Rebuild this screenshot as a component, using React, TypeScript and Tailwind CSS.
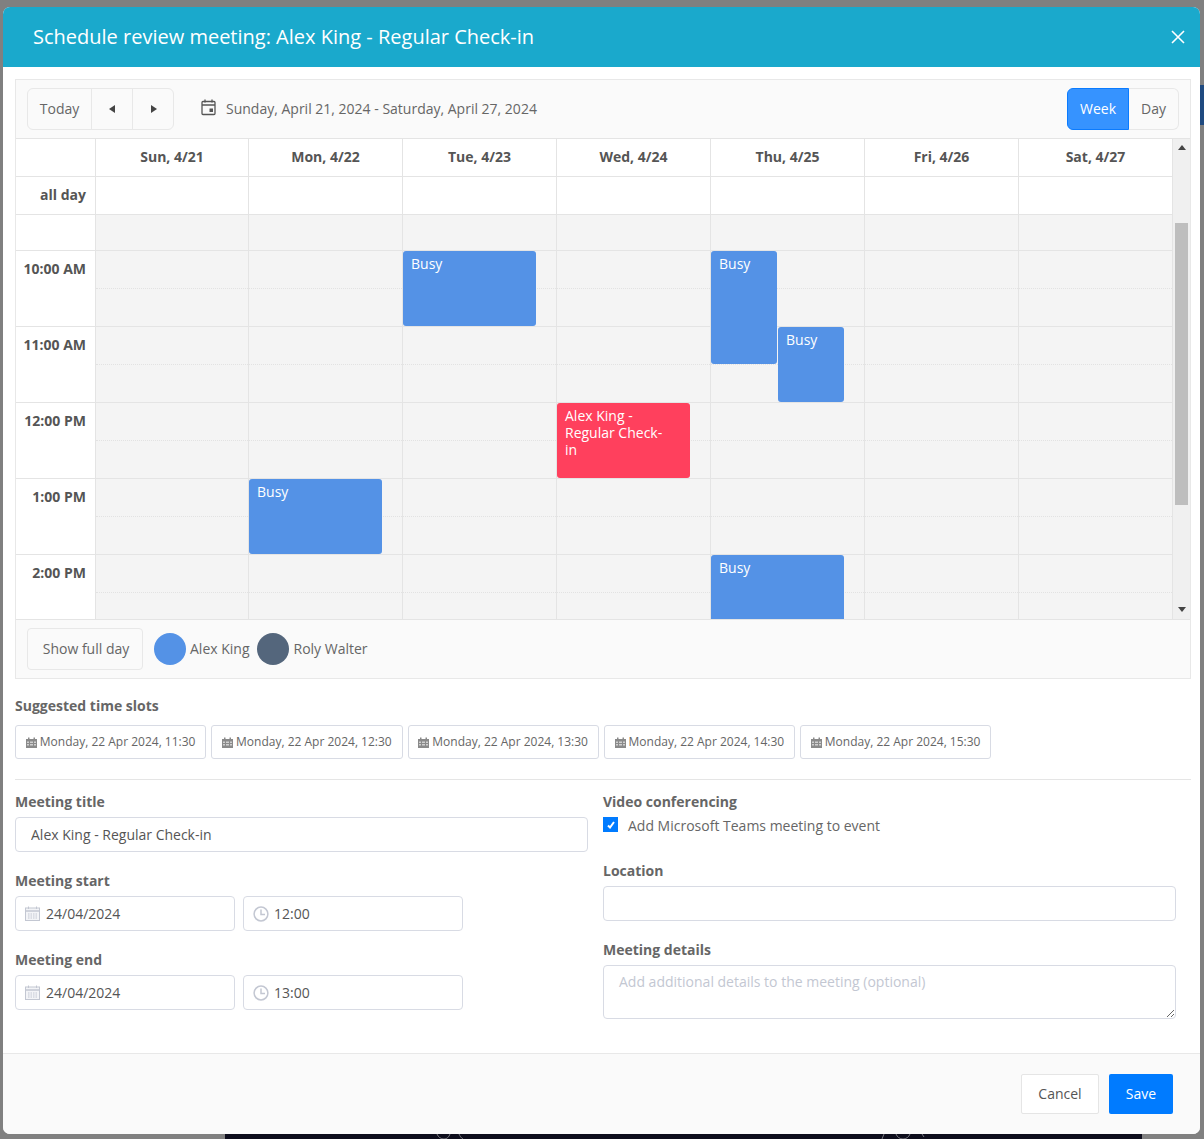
const days = ["Sun, 4/21", "Mon, 4/22", "Tue, 4/23", "Wed, 4/24", "Thu, 4/25", "Fri, 4/26", "Sat, 4/27"];
const times = ["10:00 AM", "11:00 AM", "12:00 PM", "1:00 PM", "2:00 PM"];
const slots = ["11:30", "12:30", "13:30", "14:30", "15:30"];

const CalendarIcon = () => (
  <svg width="15" height="15" viewBox="0 0 15 15" fill="#f3f4f7" stroke="#c3c7d2" strokeWidth="1">
    <rect x="0.5" y="2" width="14" height="12.5" />
    <path d="M0.5 5h14" strokeWidth="1.5" />
    <path d="M3.5 0.5v2.5M11.5 0.5v2.5" />
    <path d="M3 8h9M3 10h9M3 12h9" strokeDasharray="1.5 1" />
  </svg>
);

const ClockIcon = () => (
  <svg width="16" height="16" viewBox="0 0 16 16" fill="none" stroke="#c3c7d2" strokeWidth="1.5">
    <circle cx="8" cy="8" r="6.9" />
    <path d="M8 3.5V8.4h4" />
  </svg>
);

const MiniCalendar = () => (
  <svg width="11" height="11" viewBox="0 0 11 11" className="shrink-0">
    <path d="M0 2h11v9H0z" fill="#8a8a8a" />
    <path d="M2 0.5h1.5V3H2zM7.5 0.5H9V3H7.5z" fill="#8a8a8a" />
    <path d="M1 4.5h2v1.5H1zM4 4.5h3v1.5H4zM8 4.5h2v1.5H8zM1 7h2v1.5H1zM4 7h3v1.5H4zM8 7h2v1.5H8z" fill="#d0d0d0" />
  </svg>
);

const Event = ({ label, className }: { label: string; className: string }) => (
  <div className={`absolute rounded-[3px] pl-2 pr-5 pt-[4px] text-[14px] leading-[17px] text-white ${className}`}>{label}</div>
);

const DateField = ({ date, time }: { date: string; time: string }) => (
  <div className="flex w-[448px] gap-2">
    <div className="relative w-[220px]">
      <span className="absolute left-[10px] top-[10px]"><CalendarIcon /></span>
      <input defaultValue={date} className="h-[35px] w-full rounded-[4px] border border-[#d8dbe4] pl-[30px] text-[14px] text-[#555]" />
    </div>
    <div className="relative w-[220px]">
      <span className="absolute left-[10px] top-[10px]"><ClockIcon /></span>
      <input defaultValue={time} className="h-[35px] w-full rounded-[4px] border border-[#d8dbe4] pl-[30px] text-[14px] text-[#555]" />
    </div>
  </div>
);

const Label = ({ children }: { children: string }) => (
  <div className="mb-1 h-[21px] text-[14px] font-bold leading-[19px] text-[#666]">{children}</div>
);

export default function App() {
  return (
    <div className="relative h-[1139px] w-[1204px] overflow-hidden bg-[#808080] pt-[7px] pl-[3px] font-['Open_Sans',sans-serif]">
      {/* page peeking out under the modal */}
      <div className="absolute bottom-0 left-[225px] h-[5px] w-[917px] bg-[#0d0d1c]">
        <svg className="absolute left-[210px] top-0" width="40" height="5" viewBox="0 0 40 5" fill="none" stroke="#77777f">
          <path d="M2 0c1 3 4 5 7 5s5-2 6-5M24 0c1 2 2 4 4 5" />
        </svg>
        <svg className="absolute left-[655px] top-0" width="50" height="5" viewBox="0 0 50 5" fill="none" stroke="#77777f">
          <path d="M2 5l2-5M16 0c1 3 4 5 7 5s6-2 7-5M42 0l2 3" />
        </svg>
      </div>
      <div className="absolute right-0 top-[85px] h-[40px] w-[4px] bg-[#1f4a80]" />

      <div className="relative flex h-[1127px] w-[1197px] flex-col overflow-hidden rounded-[7px] bg-white">
        {/* Header */}
        <div className="flex h-[60px] shrink-0 items-center justify-between bg-[#1aa9cc] pl-[30px] pr-[15px] text-white">
          <h1 className="text-[20px] leading-none">Schedule review meeting: Alex King - Regular Check-in</h1>
          <svg width="14" height="14" viewBox="0 0 14 14" stroke="white" strokeWidth="1.6">
            <path d="M1 1l12 12M13 1L1 13" />
          </svg>
        </div>

        <div className="flex-1 px-3 pt-3">
          {/* Calendar */}
          <div className="h-[600px] w-[1176px] border border-[#e8e8e8] bg-[#fafafa]">
            <div className="flex h-[59px] items-center justify-between border-b border-[#e4e4e4] px-[11px] text-[14px] text-[#666]">
              <div className="flex items-center">
                <div className="flex h-[42px] items-center rounded-[6px] border border-[#e8e8e8]">
                  <div className="flex h-full w-[64px] items-center justify-center border-r border-[#e8e8e8] pb-[2px]">Today</div>
                  <div className="flex h-full w-[41px] items-center justify-center border-r border-[#e8e8e8]">
                    <svg width="7" height="8" viewBox="0 0 7 8" fill="#444"><path d="M6 0v8L0 4z" /></svg>
                  </div>
                  <div className="flex h-full w-[40px] items-center justify-center">
                    <svg width="7" height="8" viewBox="0 0 7 8" fill="#444"><path d="M1 0v8l6-4z" /></svg>
                  </div>
                </div>
                <svg className="mb-[3px] ml-[27px]" width="16" height="17" viewBox="0 0 16 17" fill="none" stroke="#555" strokeWidth="1.3">
                  <rect x="1" y="2.5" width="13" height="13" rx="1" />
                  <path d="M1 6h13M4 0.5v3M11 0.5v3" />
                  <rect x="8.5" y="9.5" width="3.5" height="3.5" fill="#555" stroke="none" />
                </svg>
                <span className="mb-[2px] ml-[9px]">Sunday, April 21, 2024 - Saturday, April 27, 2024</span>
              </div>
              <div className="flex h-[42px]">
                <div className="flex w-[62px] items-center justify-center rounded-l-[6px] border border-[#0a7bff] bg-[#3693ff] pb-[2px] font-medium text-white">Week</div>
                <div className="flex w-[50px] items-center justify-center rounded-r-[6px] border border-l-0 border-[#e8e8e8] pb-[2px]">Day</div>
              </div>
            </div>

            {/* Week grid */}
            <div className="flex h-[480px] bg-[#f0f0f0]">
              <div className="w-[1157px] shrink-0 overflow-hidden">
                <div className="flex h-[38px] border-b border-[#e4e4e4] bg-white">
                  <div className="w-[80px] shrink-0 border-r border-[#e4e4e4]" />
                  {days.map((d, i) => (
                    <div key={d} className={`flex items-center justify-center border-r border-[#e4e4e4] pb-[2px] text-[14px] font-bold text-[#555] ${i === 0 ? "w-[153px]" : "w-[154px]"}`}>{d}</div>
                  ))}
                </div>
                <div className="flex h-[38px] border-b border-[#e4e4e4] bg-white">
                  <div className="w-[80px] shrink-0 border-r border-[#e4e4e4] pr-[9px] text-right text-[14px] font-bold leading-[35px] text-[#555]">all day</div>
                  {days.map((d, i) => (
                    <div key={d} className={`border-r border-[#e4e4e4] ${i === 0 ? "w-[153px]" : "w-[154px]"}`} />
                  ))}
                </div>
                <div className="flex h-[404px] overflow-hidden">
                  <div className="w-[80px] shrink-0 border-r border-[#e4e4e4] bg-white">
                    <div className="h-[36px] border-b border-[#e4e4e4]" />
                    {times.map((t) => (
                      <div key={t} className="h-[76px] border-b border-[#e4e4e4] pr-[9px] pt-[7px] text-right text-[14px] font-bold leading-[21px] text-[#555]">{t}</div>
                    ))}
                  </div>
                  {days.map((d, i) => (
                    <div key={d} className={`relative shrink-0 border-r border-[#e4e4e4] bg-[#f4f4f4] ${i === 0 ? "w-[153px]" : "w-[154px]"}`}>
                      <div className="h-[36px] border-b border-[#e4e4e4]" />
                      {times.map((t) => (
                        <div key={t}>
                          <div className="h-[38px] border-b border-dotted border-[#e2e2e2]" />
                          <div className="h-[38px] border-b border-[#e4e4e4]" />
                        </div>
                      ))}
                      {i === 1 && <Event label="Busy" className="left-0 top-[264px] h-[75px] w-[133px] bg-[#5492e6]" />}
                      {i === 2 && <Event label="Busy" className="left-0 top-[36px] h-[75px] w-[133px] bg-[#5492e6]" />}
                      {i === 3 && <Event label="Alex King - Regular Check-in" className="left-0 top-[188px] h-[75px] w-[133px] bg-[#ff405d]" />}
                      {i === 4 && (
                        <>
                          <Event label="Busy" className="left-0 top-[36px] h-[113px] w-[66px] bg-[#5492e6]" />
                          <Event label="Busy" className="left-[67px] top-[112px] h-[75px] w-[66px] bg-[#5492e6]" />
                          <Event label="Busy" className="left-0 top-[340px] h-[75px] w-[133px] bg-[#5492e6]" />
                        </>
                      )}
                    </div>
                  ))}
                </div>
              </div>
              {/* Scrollbar */}
              <div className="relative flex-1">
                <svg className="absolute left-[5px] top-[6px]" width="8" height="5" viewBox="0 0 8 5" fill="#444"><path d="M4 0l4 5H0z" /></svg>
                <div className="absolute left-[2px] top-[84px] h-[282px] w-[13px] bg-[#bebebe]" />
                <svg className="absolute bottom-[7px] left-[5px]" width="8" height="5" viewBox="0 0 8 5" fill="#444"><path d="M4 5L8 0H0z" /></svg>
              </div>
            </div>

            <div className="flex h-[59px] items-center border-t border-[#e4e4e4] px-[11px] text-[14px] text-[#666]">
              <div className="flex h-[42px] w-[116px] items-center justify-center rounded-[4px] border border-[#e8e8e8] pb-[2px] pl-[2px]">Show full day</div>
              <div className="ml-[11px] h-8 w-8 rounded-full bg-[#5492e6]" />
              <span className="mb-[2px] ml-1">Alex King</span>
              <div className="ml-[7px] h-8 w-8 rounded-full bg-[#54667c]" />
              <span className="mb-[2px] ml-[5px]">Roly Walter</span>
            </div>
          </div>

          {/* Suggested slots */}
          <div className="mt-[17px] h-[21px] text-[14px] font-bold leading-[19px] text-[#666]">Suggested time slots</div>
          <div className="mt-2 flex gap-[5px]">
            {slots.map((s) => (
              <div key={s} className="flex h-[34px] w-[191.25px] items-center justify-center gap-[3px] rounded-[3px] border border-[#d8dbe4] text-[12px] text-[#666]">
                <MiniCalendar />
                Monday, 22 Apr 2024, {s}
              </div>
            ))}
          </div>
          <div className="mt-5 h-px w-[1176px] bg-[#e5e5e5]" />

          {/* Form */}
          <div className="mt-3 flex gap-[15px]">
            <div className="w-[573px]">
              <Label>Meeting title</Label>
              <input defaultValue="Alex King - Regular Check-in" className="h-[35px] w-full rounded-[4px] border border-[#d8dbe4] pl-[15px] text-[14px] text-[#555]" />
              <div className="mt-[19px]"><Label>Meeting start</Label></div>
              <DateField date="24/04/2024" time="12:00" />
              <div className="mt-[19px]"><Label>Meeting end</Label></div>
              <DateField date="24/04/2024" time="13:00" />
            </div>
            <div className="w-[573px]">
              <Label>Video conferencing</Label>
              <div className="flex h-[18px] items-start text-[14px] leading-[18px] text-[#666]">
                <span className="flex h-[15px] w-[15px] items-center justify-center bg-[#007bff]">
                  <svg width="8" height="8" viewBox="0 0 8 8" fill="none" stroke="white" strokeWidth="2"><path d="M1 4.5L3 6.5L7 1" /></svg>
                </span>
                <span className="ml-[10px]">Add Microsoft Teams meeting to event</span>
              </div>
              <div className="mt-[26px]"><Label>Location</Label></div>
              <input className="h-[35px] w-full rounded-[4px] border border-[#d8dbe4]" />
              <div className="mt-[19px]"><Label>Meeting details</Label></div>
              <textarea placeholder="Add additional details to the meeting (optional)" className="block h-[54px] w-full rounded-[4px] border border-[#d8dbe4] px-[15px] py-[5px] text-[14px] placeholder:text-[#c3c7d2]" />
            </div>
          </div>
        </div>

        {/* Footer */}
        <div className="flex h-[81px] shrink-0 items-start justify-end gap-[10px] border-t border-[#e8e8e8] bg-[#fafafa] pr-[27px] pt-[20px] text-[14px]">
          <div className="flex h-[40px] w-[78px] items-center justify-center rounded-[2px] border border-[#e5e5e5] bg-white pb-[2px] text-[#555]">Cancel</div>
          <div className="flex h-[40px] w-[64px] items-center justify-center rounded-[2px] bg-[#007bff] pb-[2px] font-medium text-white">Save</div>
        </div>
      </div>
    </div>
  );
}
